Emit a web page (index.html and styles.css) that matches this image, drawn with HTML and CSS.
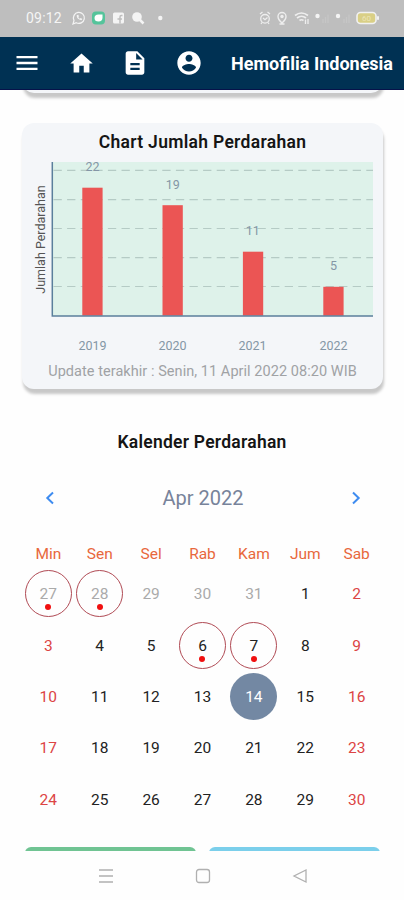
FILE: index.html
```html
<!DOCTYPE html>
<html lang="id">
<head>
    <meta charset="UTF-8">
    <meta name="viewport" content="width=device-width, initial-scale=1.0">
    <title>Hemofilia Indonesia</title>
    <link rel="stylesheet" href="styles.css">
</head>
<body>
    <div class="statusbar">
        <span class="time">09:12</span>
        <svg class="status-left" width="100" height="16" viewBox="0 0 100 16">
            <!-- whatsapp -->
            <path d="M2 14l1-3.600a5.500 5.500 0 1 1 2.200 2.300z" fill="none" stroke="#f4f4f4" stroke-width="1.200"/>
            <path d="M5.700 5.300q-.3 3.800 4.700 5l1-1.300-1.700-1-.9.700q-1.100-.6-1.500-1.800l.7-.7-.8-1.500z" fill="#f4f4f4"/>
            <rect x="21" y="1.500" width="13" height="13" rx="4" fill="#55c49b"/>
            <path d="M23.500 8q0-3.500 4-3.500h4v3q0 4-4 4t-4-3.500z" fill="#fff"/>
            <!-- facebook -->
            <rect x="42" y="2.500" width="11" height="11" rx="1.500" fill="#f4f4f4"/>
            <path d="M51.500 5.500h-1.200q-1.300 0-1.300 1.500v6.500M46.500 9h4.500" fill="none" stroke="#bebebe" stroke-width="1.500"/>
            <circle cx="66" cy="7" r="4.800" fill="#f4f4f4"/>
            <path d="M68.500 9.500l4 4" stroke="#f4f4f4" stroke-width="2.500"/>
            <circle cx="89.300" cy="8" r="2.200" fill="#f4f4f4"/>
        </svg>
        <svg class="status-right" width="122" height="16" viewBox="0 0 122 16">
            <!-- alarm -->
            <circle cx="6" cy="8.800" r="4.300" fill="none" stroke="#eee" stroke-width="1.300"/>
            <path d="M1 4l2.500-2M11 4L8.500 2M3 12.500l-1 1.500M9 12.500l1 1.500M4 8l2 1.700L8.500 7.500" fill="none" stroke="#eee" stroke-width="1.300"/>
            <!-- location -->
            <path d="M19 6.500a4 4 0 1 1 8 0q0 3-4 6.500-4-3.500-4-6.500zM20.500 14h5" fill="none" stroke="#eee" stroke-width="1.400"/>
            <circle cx="23" cy="6.500" r="1.700" fill="#eee"/>
            <!-- wifi -->
            <path d="M36 5.500q6.500-5 13 0M38 8q4.500-3.500 9 0M40.500 10.500q2-1.500 4 0" fill="none" stroke="#eee" stroke-width="1.700"/>
            <path d="M46.500 14v-4.500M49 14V9" stroke="#eee" stroke-width="1.300"/>
            <!-- signals -->
            <circle cx="58.500" cy="6" r="2.200" fill="#f4f4f4"/>
            <path d="M64 13V9M66.500 13V7M69 13V4.500" stroke="#c6c6c6" stroke-width="1.300"/>
            <circle cx="79" cy="6" r="2.200" fill="#f4f4f4"/>
            <path d="M85 13V9M87.500 13V7M90 13V4.500" stroke="#c6c6c6" stroke-width="1.300"/>
            <!-- battery -->
            <rect x="98" y="2.500" width="19" height="11" rx="3.500" fill="#d9cf86" stroke="#f1f1f1" stroke-width="1.600"/>
            <rect x="118" y="6" width="2" height="4" rx="1" fill="#f1f1f1"/>
            <text x="107.500" y="11" class="battery-text">60</text>
        </svg>
    </div>

    <div class="navbar">
        <a href="#"><svg width="28" height="28" viewBox="0 0 24 24"><path d="M3 18h18v-2H3v2zm0-5h18v-2H3v2zm0-7v2h18V6H3z"/></svg></a>
        <a href="#"><svg width="27" height="27" viewBox="0 0 24 24"><path d="M10 20v-6h4v6h5v-8h3L12 3 2 12h3v8z"/></svg></a>
        <a href="#"><svg width="28" height="28" viewBox="0 0 24 24"><path d="M14 2H6c-1.100 0-2 .9-2 2v16c0 1.100.9 2 2 2h12c1.100 0 2-.9 2-2V8l-6-6zm2 16H8v-2h8v2zm0-4H8v-2h8v2zm-3-5V3.500L18.500 9H13z"/></svg></a>
        <a href="#"><svg width="28" height="28" viewBox="0 0 24 24"><path d="M12 2C6.480 2 2 6.480 2 12s4.480 10 10 10 10-4.480 10-10S17.520 2 12 2zm0 3c1.660 0 3 1.340 3 3s-1.340 3-3 3-3-1.340-3-3 1.340-3 3-3zm0 14.200c-2.500 0-4.710-1.280-6-3.220.03-1.990 4-3.080 6-3.080 1.990 0 5.970 1.090 6 3.080-1.290 1.940-3.500 3.220-6 3.220z"/></svg></a>
        <span class="brand">Hemofilia Indonesia</span>
    </div>

    <div class="content">
        <div class="card card-top"></div>

        <div class="card card-chart">
            <h2 class="chart-title">Chart Jumlah Perdarahan</h2>
            <svg class="chart" width="361" height="200" viewBox="22 157 361 200">
                <rect x="52" y="162" width="321" height="154" fill="#def2ea"/>
                <path class="grid-line" d="M53.500 170.300H373M53.500 199.600H373M53.500 228.500H373M53.500 257.600H373M53.500 286.500H373"/>
                <g fill="#eb5554">
                    <rect x="82.300" y="187.700" width="20.300" height="128"/>
                    <rect x="162.500" y="205.200" width="20.300" height="110.500"/>
                    <rect x="242.900" y="251.700" width="20.300" height="64"/>
                    <rect x="323.300" y="286.800" width="20.300" height="29"/>
                </g>
                <path d="M52.300 162V316H373" fill="none" stroke="#5b7f9c" stroke-width="1.500"/>
                <g class="chart-label">
                    <text x="92.500" y="171">22</text>
                    <text x="172.700" y="188.500">19</text>
                    <text x="252.700" y="235">11</text>
                    <text x="333.500" y="270">5</text>
                    <text x="92.500" y="350">2019</text>
                    <text x="172.500" y="350">2020</text>
                    <text x="252.500" y="350">2021</text>
                    <text x="333.500" y="350">2022</text>
                </g>
                <text class="axis-label" transform="translate(44.500 239.500) rotate(-90)">Jumlah Perdarahan</text>
            </svg>
            <p class="update">Update terakhir : Senin, 11 April 2022 08:20 WIB</p>
        </div>

        <h2 class="calendar-title">Kalender Perdarahan</h2>
        <div class="month">
            <svg width="10" height="14" viewBox="0 0 10 14"><path d="M8 1.500L2.300 7 8 12.500"/></svg>
            <span>Apr 2022</span>
            <svg width="10" height="14" viewBox="0 0 10 14"><path d="M2 1.500L7.700 7 2 12.500"/></svg>
        </div>
        <div class="weekdays">
            <span>Min</span><span>Sen</span><span>Sel</span><span>Rab</span><span>Kam</span><span>Jum</span><span>Sab</span>
        </div>
        <div class="days">
            <span class="off mark">27</span><span class="off mark">28</span><span class="off">29</span><span class="off">30</span><span class="off">31</span><span>1</span><span class="red">2</span>
            <span class="red">3</span><span>4</span><span>5</span><span class="mark">6</span><span class="mark">7</span><span>8</span><span class="red">9</span>
            <span class="red">10</span><span>11</span><span>12</span><span>13</span><span class="today">14</span><span>15</span><span class="red">16</span>
            <span class="red">17</span><span>18</span><span>19</span><span>20</span><span>21</span><span>22</span><span class="red">23</span>
            <span class="red">24</span><span>25</span><span>26</span><span>27</span><span>28</span><span>29</span><span class="red">30</span>
        </div>
        <div class="buttons">
            <div class="btn green"></div>
            <div class="btn blue"></div>
        </div>
    </div>

    <div class="bottombar">
        <svg width="16" height="16" viewBox="0 0 16 16"><path d="M1 2h14M1 8h14M1 14h14"/></svg>
        <svg width="16" height="16" viewBox="0 0 16 16"><rect x="1.500" y="1.500" width="13" height="13" rx="2.500"/></svg>
        <svg width="16" height="16" viewBox="0 0 16 16"><path d="M14 2v12L2 8z"/></svg>
    </div>
</body>
</html>
```
FILE: styles.css
```css
* {
    box-sizing: border-box;
}
body {
    margin: 0;
    height: 900px;
    display: flex;
    flex-direction: column;
    overflow: hidden;
    font-family: Roboto, Arial, sans-serif;
    background-color: #fefefe;
}
.statusbar {
    height: 37px;
    flex: none;
    display: flex;
    align-items: center;
    padding: 0 23px 1px 26px;
    background-color: #bebebe;
    color: #f5f5f5;
}
.time {
    width: 45px;
    font-size: 14px;
    letter-spacing: 0.2px;
}
.status-right {
    margin-left: auto;
}
.battery-text {
    font-size: 8px;
    fill: #ece5b8;
    text-anchor: middle;
}
.navbar {
    height: 53px;
    flex: none;
    display: flex;
    align-items: center;
    padding: 0 11px 0 13px;
    background-color: #003153;
    border-bottom: 1px solid #06124a;
}
.navbar a {
    width: 28px;
    height: 28px;
    margin-right: 26px;
    display: flex;
    align-items: center;
    justify-content: center;
}
.navbar svg {
    fill: #fff;
}
.brand {
    margin-left: auto;
    color: #fff;
    font-size: 18px;
    font-weight: bold;
    white-space: nowrap;
}
.content {
    flex: 1;
    min-height: 0;
    overflow: hidden;
}
.card {
    margin: 0 21px 0 22px;
    background-color: #f4f6f9;
    border-radius: 12px;
    box-shadow: 1px 5px 3px #c8c8c8;
}
.card-top {
    height: 30px;
    margin-top: -27px;
}
.card-chart {
    height: 266px;
    margin-top: 30px;
}
.chart-title {
    margin: 0;
    height: 34px;
    line-height: 39px;
    text-align: center;
    font-size: 17.5px;
    font-weight: 600;
    letter-spacing: 0.3px;
    color: #151515;
}
.chart {
    display: block;
}
.grid-line {
    stroke: #b5cbc5;
    stroke-width: 1.2;
    stroke-dasharray: 8.3 5.3;
}
.chart-label {
    font-size: 12.5px;
    fill: #8496a6;
    text-anchor: middle;
}
.axis-label {
    font-size: 12.5px;
    fill: #555;
    text-anchor: middle;
}
.update {
    margin: 5px 0 0;
    line-height: 20px;
    text-align: center;
    font-size: 14.5px;
    letter-spacing: 0.05px;
    color: #a0a2a5;
    white-space: nowrap;
}
.calendar-title {
    margin: 42px 0 0;
    line-height: 22px;
    text-align: center;
    font-size: 17.5px;
    font-weight: 600;
    letter-spacing: 0.25px;
    color: #151515;
}
.month {
    margin: 33px 43px 0 45px;
    height: 24px;
    display: flex;
    align-items: center;
    justify-content: space-between;
    font-size: 20px;
    color: #77839a;
}
.month path {
    fill: none;
    stroke: #3e8cf0;
    stroke-width: 2;
}
.weekdays, .days {
    display: grid;
    grid-template-columns: repeat(7, 51.4px);
    justify-content: center;
    justify-items: center;
    padding-left: 1px;
}
.weekdays {
    margin-top: 34px;
    line-height: 20px;
    font-size: 15.5px;
    color: #e8683c;
}
.days {
    margin-top: 4px;
    grid-auto-rows: 51.4px;
    align-items: center;
    font-size: 15.5px;
    color: #222;
}
.days span {
    width: 47px;
    height: 47px;
    line-height: 48px;
    border-radius: 50%;
    text-align: center;
}
.days .off {
    color: #aaa;
}
.days .red {
    color: #dc4444;
}
.days .mark {
    position: relative;
    border: 1.5px solid #b04a54;
    line-height: 46px;
}
.mark::after {
    content: "";
    position: absolute;
    left: 50%;
    bottom: 6px;
    width: 6px;
    height: 6px;
    margin-left: -3px;
    border-radius: 50%;
    background-color: #f01010;
}
.days .today {
    background-color: #7388a3;
    color: #fff;
}
.buttons {
    display: flex;
    gap: 13px;
    margin: 22px 24px 0 25px;
}
.btn {
    flex: 1;
    height: 40px;
    border-radius: 6px;
}
.green {
    background-color: #70c493;
}
.blue {
    background-color: #7bcfeb;
}
.bottombar {
    height: 49px;
    flex: none;
    display: flex;
    justify-content: center;
    align-items: center;
    gap: 81px;
    padding-left: 1px;
    background-color: #fefefe;
}
.bottombar svg {
    fill: none;
    stroke: #b0b0b0;
    stroke-width: 1.3;
}
```
